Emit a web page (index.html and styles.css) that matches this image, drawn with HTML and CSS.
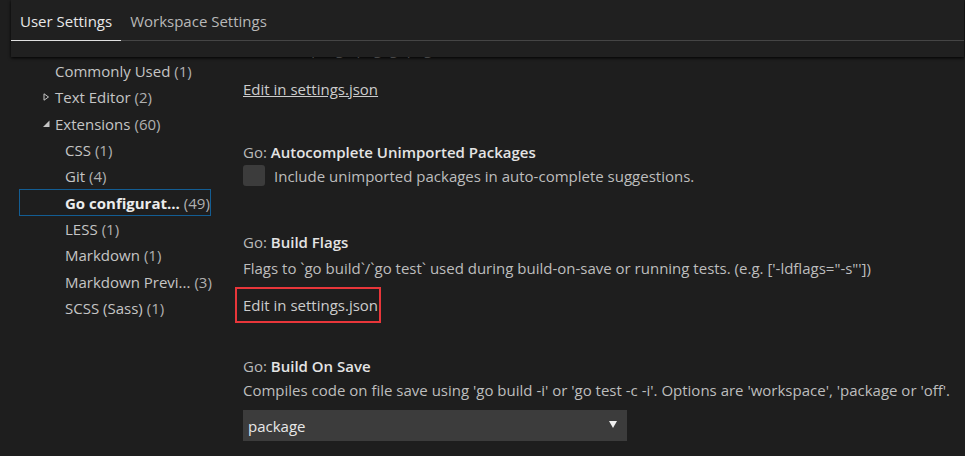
FILE: index.html
```html
<!DOCTYPE html>
<html>
<head>
<meta charset="utf-8">
<link rel="stylesheet" href="styles.css">
</head>
<body>
<header class="header">
  <nav class="tabs">
    <div class="tab active">User Settings</div>
    <div class="tab">Workspace Settings</div>
  </nav>
</header>
<main class="main">
  <aside class="toc">
    <div class="toc-row lvl0">Commonly Used <span class="count">(1)</span></div>
    <div class="toc-row lvl0 has-twistie"><svg class="twistie" width="6" height="8" viewBox="0 0 6 8"><path d="M0.5 0.8 L5 4 L0.5 7.2 Z" fill="none" stroke="#c5c5c5" stroke-width="1"/></svg>Text Editor <span class="count">(2)</span></div>
    <div class="toc-row lvl0 has-twistie"><svg class="twistie open" width="8" height="8" viewBox="0 0 8 8"><path d="M7 0.5 L7 7 L0.5 7 Z" fill="#c5c5c5"/></svg>Extensions <span class="count">(60)</span></div>
    <div class="toc-row lvl1">CSS <span class="count">(1)</span></div>
    <div class="toc-row lvl1">Git <span class="count">(4)</span></div>
    <div class="toc-row lvl1 selected"><b>Go configurat...</b> <span class="count">(49)</span></div>
    <div class="toc-row lvl1">LESS <span class="count">(1)</span></div>
    <div class="toc-row lvl1">Markdown <span class="count">(1)</span></div>
    <div class="toc-row lvl1">Markdown Previ... <span class="count">(3)</span></div>
    <div class="toc-row lvl1">SCSS (Sass) <span class="count">(1)</span></div>
  </aside>
  <section class="settings">
    <div class="desc peek">Tools: 'ps, go pkg, gopkg'</div>
    <div class="link-row"><a class="edit-link underlined">Edit in settings.json</a></div>

    <div class="setting s-autocomplete">
      <div class="title"><span class="cat">Go: </span><b>Autocomplete Unimported Packages</b></div>
      <label class="check-row"><span class="checkbox"></span><span class="check-label">Include unimported packages in auto-complete suggestions.</span></label>
    </div>

    <div class="setting s-flags">
      <div class="title"><span class="cat">Go: </span><b>Build Flags</b></div>
      <div class="desc">Flags to `go build`/`go test` used during build-on-save or running tests. (e.g. ['-ldflags="-s"'])</div>
      <div class="link-row boxed"><a class="edit-link">Edit in settings.json</a></div>
    </div>

    <div class="setting s-save">
      <div class="title"><span class="cat">Go: </span><b>Build On Save</b></div>
      <div class="desc">Compiles code on file save using 'go build -i' or 'go test -c -i'. Options are 'workspace', 'package or 'off'.</div>
      <div class="select"><span>package</span><svg class="caret" width="8" height="7" viewBox="0 0 8 7"><path d="M0 0 H8 L4 7 Z" fill="#f0f0f0"/></svg></div>
    </div>
  </section>
</main>
</body>
</html>
```

FILE: styles.css
```css
html, body {
  margin: 0;
  padding: 0;
  background: #1e1e1e;
  width: 965px;
  height: 456px;
  overflow: hidden;
  font-family: "Open Sans", "Noto Sans", sans-serif;
  font-size: 15px;
  color: #cccccc;
}

.header {
  position: relative;
  z-index: 2;
  height: 57px;
  margin: 0 1px 0 11px;
  background: #202020;
  box-shadow: 0 1px 3px #000;
}

.tabs {
  display: flex;
  height: 40px;
  border-bottom: 1px solid #454545;
}

.tab {
  padding: 0 9px;
  line-height: 42px;
  color: #b8b8b8;
  font-size: 15px;
}

.tab.active {
  color: #e8e8e8;
  box-shadow: inset 0 -1px 0 #e0e0e0;
  margin-bottom: -1px;
  line-height: 41px;
  padding-top: 1px;
}

.main {
  display: flex;
}

.toc {
  width: 192px;
  margin-left: 19px;
  padding-top: 1px;
  font-size: 15px;
  color: #c5c5c5;
}

.toc-row {
  height: 26.3px;
  line-height: 26px;
  box-sizing: border-box;
  white-space: nowrap;
  display: flex;
  align-items: center;
}

.toc-row .count {
  margin-left: 4px;
  color: #b0b0b0;
}

.lvl0 { padding-left: 36px; }
.lvl1 { padding-left: 46px; }
.lvl0.has-twistie { padding-left: 19px; }

.twistie {
  width: 17px;
  flex: none;
}

.toc-row.selected {
  border: 1px solid #135d93;
  padding-left: 45px;
}

.toc-row.selected b {
  color: #ececec;
  font-weight: 700;
}

.settings {
  margin-left: 32px;
  margin-top: -19px;
  flex: 1;
}

.desc {
  color: #bdbdbd;
  line-height: 20px;
  white-space: nowrap;
}

.peek {
  padding-left: 20px;
}

.link-row {
  margin-top: 21px;
  line-height: 20px;
}

.edit-link {
  color: #cccccc;
}

.edit-link.underlined {
  text-decoration: underline;
}

.s-autocomplete { margin-top: 42px; }
.s-flags { margin-top: 45px; }
.s-save { margin-top: 32px; }

.title {
  line-height: 22px;
  color: #b8b8b8;
}

.title b {
  color: #e4e4e4;
  font-weight: 600;
}

.check-row {
  display: flex;
  align-items: center;
  margin-top: 2px;
  height: 21px;
}

.checkbox {
  width: 22px;
  height: 21px;
  border-radius: 3px;
  background: #3c3c3c;
  margin-right: 9px;
}

.check-label {
  color: #bdbdbd;
}

.s-flags .desc {
  margin-top: 5px;
}

.link-row.boxed {
  margin-top: 9px;
  margin-left: -8px;
  width: 136px;
  height: 32px;
  border: 2px solid #e8363a;
  box-sizing: content-box;
  padding-left: 6px;
  display: flex;
  align-items: center;
}

.s-save .desc {
  margin-top: 3px;
}

.select {
  margin-top: 10px;
  width: 384px;
  height: 31px;
  background: #3c3c3c;
  display: flex;
  align-items: center;
  justify-content: space-between;
  padding: 0 10px 0 5px;
  box-sizing: border-box;
  color: #e8e8e8;
  font-size: 15px;
}

.caret { margin-top: -2px; }
```
